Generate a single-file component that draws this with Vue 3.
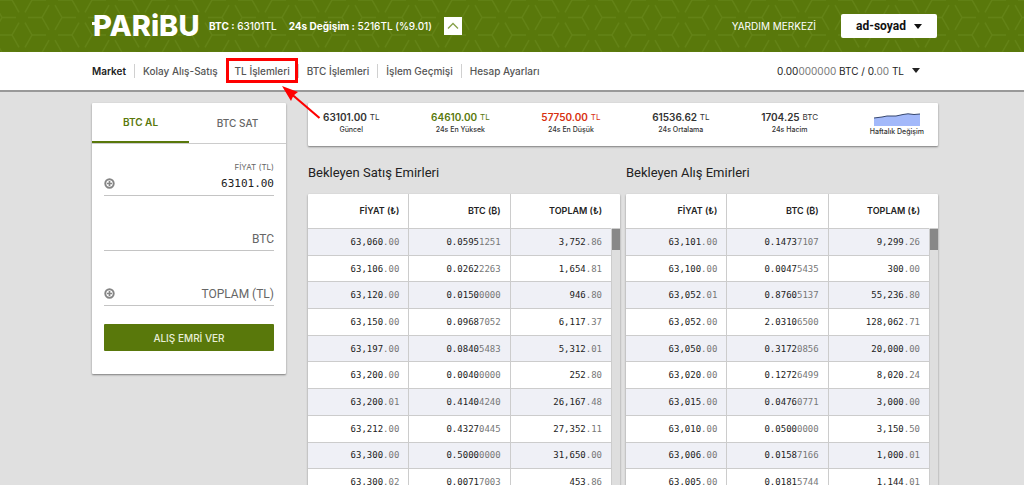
<script setup>
import { ref } from 'vue'

const price = ref('63101.00')
const amount = ref('')
const total = ref('')

const stats = [
  { value: '63101.00', unit: 'TL', label: 'Güncel', tone: '' },
  { value: '64610.00', unit: 'TL', label: '24s En Yüksek', tone: 'up' },
  { value: '57750.00', unit: 'TL', label: '24s En Düşük', tone: 'down' },
  { value: '61536.62', unit: 'TL', label: '24s Ortalama', tone: '' },
  { value: '1704.25', unit: 'BTC', label: '24s Hacim', tone: '' }
]

// Each cell is [emphasised part, dimmed part]
const books = [
  {
    title: 'Bekleyen Satış Emirleri',
    rows: [
      [['63,060', '.00'], ['0.0595', '1251'], ['3,752', '.86']],
      [['63,106', '.00'], ['0.0262', '2263'], ['1,654', '.81']],
      [['63,120', '.00'], ['0.0150', '0000'], ['946', '.80']],
      [['63,150', '.00'], ['0.0968', '7052'], ['6,117', '.37']],
      [['63,197', '.00'], ['0.0840', '5483'], ['5,312', '.01']],
      [['63,200', '.00'], ['0.0040', '0000'], ['252', '.80']],
      [['63,200', '.01'], ['0.4140', '4240'], ['26,167', '.48']],
      [['63,212', '.00'], ['0.4327', '0445'], ['27,352', '.11']],
      [['63,300', '.00'], ['0.5000', '0000'], ['31,650', '.00']],
      [['63,300', '.02'], ['0.0071', '7003'], ['453', '.86']]
    ]
  },
  {
    title: 'Bekleyen Alış Emirleri',
    rows: [
      [['63,101', '.00'], ['0.1473', '7107'], ['9,299', '.26']],
      [['63,100', '.00'], ['0.0047', '5435'], ['300', '.00']],
      [['63,052', '.01'], ['0.8760', '5137'], ['55,236', '.80']],
      [['63,052', '.00'], ['2.0310', '6500'], ['128,062', '.71']],
      [['63,050', '.00'], ['0.3172', '0856'], ['20,000', '.00']],
      [['63,020', '.00'], ['0.1272', '6499'], ['8,020', '.24']],
      [['63,015', '.00'], ['0.0476', '0771'], ['3,000', '.00']],
      [['63,010', '.00'], ['0.0500', '0000'], ['3,150', '.50']],
      [['63,006', '.00'], ['0.0158', '7166'], ['1,000', '.01']],
      [['63,005', '.00'], ['0.0181', '5744'], ['1,144', '.01']]
    ]
  }
]
</script>

<template>
  <div class="page">
    <header class="top">
      <svg class="top-pattern" aria-hidden="true">
        <defs>
          <pattern id="cubes" x="22" y="0" width="60" height="35" patternUnits="userSpaceOnUse">
            <g fill="none" stroke="#6a8a1e" stroke-width="1.5">
              <path d="M6 17.5H20M40 17.5H54M3 12.3L10 0M57 12.3L50 0M3 22.7L10 35M57 22.7L50 35" />
              <path d="M24 0H10M36 0H50M24 35H10M36 35H50M27 5.2L20 17.5M33 5.2L40 17.5M27 29.8L20 17.5M33 29.8L40 17.5" />
            </g>
          </pattern>
        </defs>
        <rect width="100%" height="100%" fill="url(#cubes)" />
      </svg>
      <div class="top-inner">
        <a class="logo" href="#">PARiBU</a>
        <p class="ticker"><span><b>BTC :</b> 63101TL</span><span><b>24s Değişim :</b> 5216TL (%9.01)</span></p>
        <button class="collapse" type="button" aria-label="Daralt">
          <svg width="12" height="8" viewBox="0 0 12 8"><path d="M1 6.500L6 1.500L11 6.500" fill="none" stroke="#86a04a" stroke-width="1.300" /></svg>
        </button>
        <a class="help" href="#">YARDIM MERKEZİ</a>
        <button class="account" type="button">ad-soyad <i class="caret"></i></button>
      </div>
    </header>

    <nav class="nav">
      <ul>
        <li><a class="current" href="#">Market</a></li>
        <li><a href="#">Kolay Alış-Satış</a></li>
        <li class="marked">
          <a href="#">TL İşlemleri</a>
          <svg class="arrow" width="42" height="36" viewBox="0 0 42 36" aria-hidden="true">
            <path d="M38.500 32L11 8.500" stroke="#fe0000" stroke-width="2.200" />
            <path d="M1 0L17 6L12.500 9.500L10 15Z" fill="#fe0000" />
          </svg>
        </li>
        <li><a href="#">BTC İşlemleri</a></li>
        <li><a href="#">İşlem Geçmişi</a></li>
        <li><a href="#">Hesap Ayarları</a></li>
      </ul>
      <button class="balance" type="button">
        <span>0.00<em>000000</em> BTC / 0.<em>00</em> TL</span> <i class="caret"></i>
      </button>
    </nav>

    <main class="content">
      <form class="card order" @submit.prevent>
        <div class="tabs">
          <button class="tab active" type="button">BTC AL</button>
          <button class="tab" type="button">BTC SAT</button>
        </div>
        <div class="fields">
          <div class="field">
            <label for="price">FİYAT (TL)</label>
            <div class="line">
              <button class="plus" type="button" aria-label="Fiyat ekle">
                <svg width="11" height="11" viewBox="0 0 11 11"><circle cx="5.500" cy="5.500" r="4.200" fill="#fff" stroke="#858585" stroke-width="2" /><path d="M5.500 3V8M3 5.500H8" stroke="#858585" stroke-width="1.700" /></svg>
              </button>
              <input id="price" v-model="price" class="filled" type="text" />
            </div>
          </div>
          <div class="field">
            <div class="line">
              <input v-model="amount" type="text" placeholder="BTC" aria-label="BTC" />
            </div>
          </div>
          <div class="field">
            <div class="line">
              <button class="plus" type="button" aria-label="Toplam ekle">
                <svg width="11" height="11" viewBox="0 0 11 11"><circle cx="5.500" cy="5.500" r="4.200" fill="#fff" stroke="#858585" stroke-width="2" /><path d="M5.500 3V8M3 5.500H8" stroke="#858585" stroke-width="1.700" /></svg>
              </button>
              <input v-model="total" type="text" placeholder="TOPLAM (TL)" aria-label="TOPLAM (TL)" />
            </div>
          </div>
          <button class="submit" type="submit">ALIŞ EMRİ VER</button>
        </div>
      </form>

      <div class="market">
        <section class="card stats">
          <div v-for="s in stats" :key="s.label" class="stat">
            <p :class="['figure', s.tone]"><b>{{ s.value }}</b> <small>{{ s.unit }}</small></p>
            <p class="caption">{{ s.label }}</p>
          </div>
          <div class="stat">
            <svg class="spark" width="46" height="13" viewBox="0 0 46 13" aria-hidden="true">
              <path d="M0 5L8 4L13 3L22 3L29 1.500L34 0.800L40 1.500L46 1V13H0Z" fill="#a3b9fa" />
              <path d="M0 5L8 4L13 3L22 3L29 1.500L34 0.800L40 1.500L46 1" fill="none" stroke="#35466e" />
            </svg>
            <p class="caption">Haftalık Değişim</p>
          </div>
        </section>

        <div class="books">
          <section v-for="b in books" :key="b.title" class="book">
            <h2>{{ b.title }}</h2>
            <div class="card sheet">
              <table>
                <thead>
                  <tr>
                    <th>FİYAT (₺)</th>
                    <th>BTC (₿)</th>
                    <th>TOPLAM (₺)</th>
                    <th class="gutter"></th>
                  </tr>
                </thead>
                <tbody>
                  <tr v-for="(row, i) in b.rows" :key="i">
                    <td v-for="(cell, j) in row" :key="j"><b>{{ cell[0] }}</b>{{ cell[1] }}</td>
                    <td :class="['gutter', { thumb: i === 0 }]"></td>
                  </tr>
                </tbody>
              </table>
            </div>
          </section>
        </div>
      </div>
    </main>
  </div>
</template>

<style>
body {
  margin: 0;
  background: #e0e0e0;
}
</style>

<style scoped>
.page {
  height: 100vh;
  overflow: hidden;
  font-family: Inter, "Noto Sans", "Liberation Sans", sans-serif;
  font-size: 10px;
  line-height: 14px;
  color: #333;
}
.page * {
  box-sizing: border-box;
}
p, h2, ul {
  margin: 0;
  padding: 0;
}
a {
  color: inherit;
  text-decoration: none;
}
button, input {
  font: inherit;
  color: inherit;
  border: 0;
  padding: 0;
  background: none;
}
.caret {
  display: inline-block;
  border: 4px solid transparent;
  border-top: 5px solid currentColor;
  border-bottom: 0;
}

.top {
  position: relative;
  height: 52px;
  background: #59780b;
  color: #fff;
}
.top-pattern {
  position: absolute;
  inset: 0;
  width: 100%;
  height: 100%;
  opacity: 0.6;
}
.top-inner {
  position: relative;
  height: 100%;
  padding: 0 87px 0 92px;
  display: flex;
  align-items: center;
}
.logo {
  position: relative;
  width: 117px;
  padding-left: 1px;
  font-size: 29px;
  font-weight: 800;
  line-height: 52px;
}
.logo::before {
  content: "";
  position: absolute;
  left: 0;
  top: 22px;
  width: 5px;
  height: 3px;
  background: #fff;
}
.ticker {
  display: flex;
  gap: 12px;
  font-weight: 500;
  white-space: nowrap;
}
.collapse {
  width: 18px;
  height: 18px;
  margin-left: 12px;
  background: #fff;
  display: flex;
  align-items: center;
  justify-content: center;
}
.help {
  margin-left: auto;
}
.account {
  width: 96px;
  height: 24px;
  margin-left: 25px;
  display: flex;
  align-items: center;
  justify-content: center;
  gap: 8px;
  border-radius: 2px;
  background: #fff;
  color: #111;
  font-family: Roboto, sans-serif;
  font-size: 12px;
  font-weight: 700;
}

.nav {
  height: 40px;
  padding: 0 104px 1px 92px;
  display: flex;
  align-items: center;
  justify-content: space-between;
  background: #fff;
  border-bottom: 2px solid #999;
  color: #555;
}
.nav ul {
  display: flex;
  list-style: none;
  font-weight: 500;
}
.nav li {
  position: relative;
  padding: 0 8px;
  border-left: 1px solid #d0d0d0;
  white-space: nowrap;
}
.nav li:first-child {
  padding-left: 0;
  border-left: 0;
}
.nav .current {
  color: #222;
  font-weight: 600;
}
.marked::after {
  content: "";
  position: absolute;
  inset: -6px 0 -5px -1px;
  border: 3px solid #fe0000;
}
.arrow {
  position: absolute;
  left: 54px;
  top: 22px;
  z-index: 2;
}
.balance {
  display: flex;
  align-items: center;
  gap: 8px;
  color: #222;
}
.balance em {
  font-style: normal;
  color: #777;
}

.content {
  display: flex;
  align-items: flex-start;
  gap: 22px;
  padding: 11px 86px 0 92px;
}
.card {
  background: #fff;
  border-radius: 1px;
  box-shadow: 0 1px 2px rgba(0, 0, 0, 0.45);
}
.order {
  flex: 0 0 194px;
  padding-bottom: 23px;
}
.tabs {
  display: flex;
  border-bottom: 1px solid #ccc;
}
.tab {
  flex: 1;
  height: 40px;
  color: #666;
  font-weight: 500;
}
.tab.active {
  color: #59780b;
  font-weight: 600;
  margin-bottom: -1px;
  border-bottom: 2px solid #59780b;
}
.fields {
  padding: 0 12px;
}
.field {
  height: 55px;
  display: flex;
  flex-direction: column;
  justify-content: flex-end;
  text-align: right;
}
.field label {
  font-size: 8px;
  line-height: 10px;
  color: #666;
}
.field:first-child {
  height: 52px;
}
.line {
  height: 24px;
  display: flex;
  align-items: center;
  border-bottom: 1px solid #c4c4c4;
}
.plus {
  display: flex;
}
.line input {
  flex: 1;
  min-width: 0;
  text-align: right;
  font-family: Roboto, sans-serif;
  font-size: 12px;
}
.line input.filled {
  font-family: "DejaVu Sans Mono", monospace;
  font-size: 11px;
  color: #222;
}
.line input::placeholder {
  color: #666;
  opacity: 1;
}
.submit {
  width: 100%;
  height: 27px;
  margin-top: 18px;
  border-radius: 1px;
  background: #59780b;
  color: #e8eed8;
  font-weight: 500;
}

.market {
  flex: 1;
  min-width: 0;
}
.stats {
  height: 43px;
  padding: 7px 14px 0 15px;
  display: flex;
  justify-content: space-between;
}
.stat {
  text-align: center;
}
.figure b {
  font-weight: 600;
}
.figure small {
  font-size: 8px;
  vertical-align: 1px;
}
.up {
  color: #59780b;
}
.down {
  color: #d8300f;
}
.caption {
  font-size: 7px;
  line-height: 12px;
  font-weight: 500;
}
.spark {
  display: block;
  margin: 3px auto 0;
}
.books {
  display: flex;
  gap: 6px;
}
.book {
  flex: 1;
}
h2 {
  margin: 18px 0 13px;
  font-family: Roboto, sans-serif;
  font-size: 13px;
  font-weight: 400;
  line-height: 17px;
  color: #222;
}
table {
  width: 100%;
  height: 302px;
  table-layout: fixed;
  border-collapse: separate;
  border-spacing: 0;
}
th, td {
  padding: 0 9px 0 0;
  text-align: right;
  border-right: 1px solid #ccc;
  border-bottom: 1px solid #ccc;
}
th {
  height: 35px;
  font-size: 9px;
  font-weight: 600;
  color: #222;
  white-space: nowrap;
}
th:nth-child(3) {
  border-right-color: transparent;
}
td {
  font-family: "DejaVu Sans Mono", "Liberation Mono", monospace;
  font-size: 9px;
  line-height: 12px;
  color: #777;
}
td b {
  font-weight: 400;
  color: #222;
}
tbody tr:nth-child(odd) {
  background: #eff0f6;
}
.gutter {
  width: 8px;
  padding: 0;
  border-right: 0;
}
td.gutter {
  background: #dedede;
  border-bottom: 0;
}
td.thumb {
  background: linear-gradient(#888 21px, #dedede 21px);
}
</style>
